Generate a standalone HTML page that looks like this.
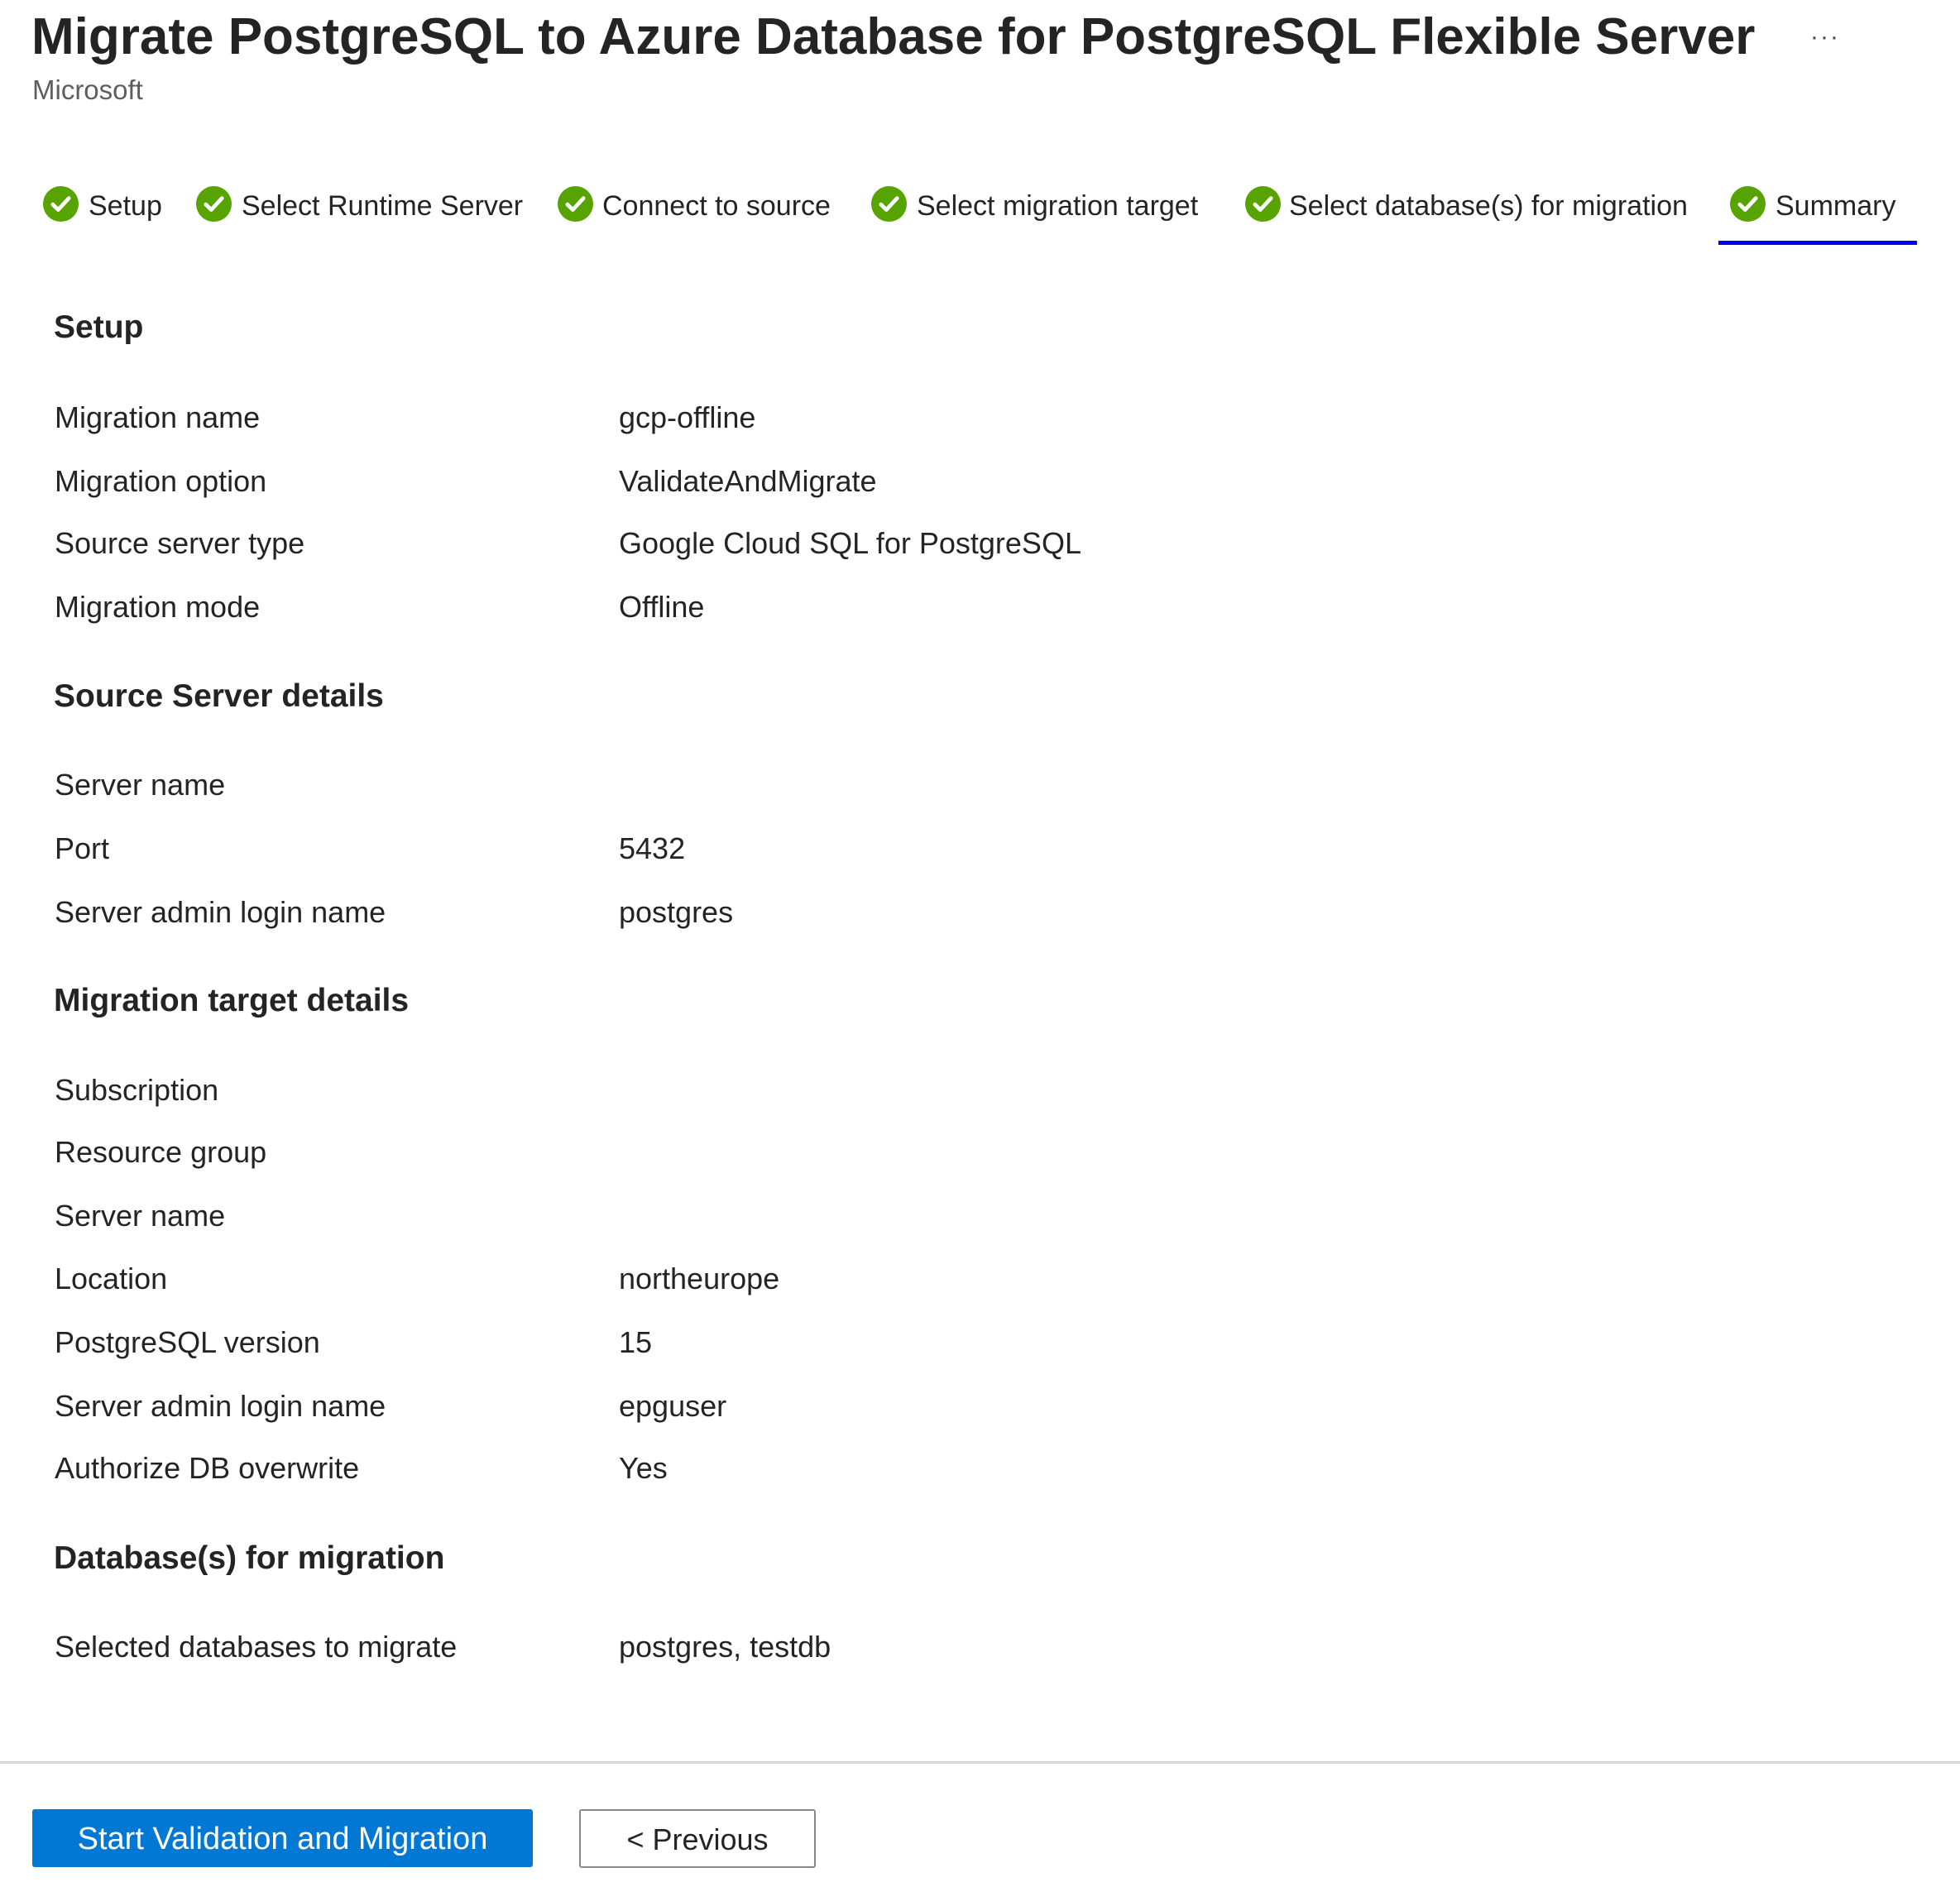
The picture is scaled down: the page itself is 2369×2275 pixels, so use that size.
<!DOCTYPE html>
<html><head><meta charset="utf-8"><style>
body{margin:0;width:2369px;height:2275px;background:#fff;position:relative;overflow:hidden;font-family:"Segoe UI","Liberation Sans",sans-serif;color:#242424}
.a{position:absolute;white-space:nowrap}
.t{font-size:62px;font-weight:600;left:38px;top:2px;line-height:86px;color:#242424}
.ms{font-size:33px;left:39px;top:89px;line-height:40px;color:#605e5c}
.tab{font-size:34px;line-height:44px;top:227px;color:#242424}
.ic{position:absolute;top:225px;width:43px;height:43px}
.h{font-size:39px;font-weight:700;line-height:50px;left:65px}
.l{font-size:36px;line-height:44px;left:66px}
.v{font-size:36px;line-height:44px;left:748px}
</style></head><body>
<div class="a t">Migrate PostgreSQL to Azure Database for PostgreSQL Flexible Server</div>
<div class="a" style="left:2188px;top:28px;font-size:30px;color:#444;letter-spacing:2px">···</div>
<div class="a ms">Microsoft</div>

<svg class="ic" style="left:52px" viewBox="0 0 20 20"><circle cx="10" cy="10" r="10" fill="#57a300"/><path d="M5.5 10.3l3 3 6-6.5" stroke="#fff" stroke-width="2.2" fill="none" stroke-linecap="round" stroke-linejoin="round"/></svg>
<div class="a tab" style="left:107px">Setup</div>
<svg class="ic" style="left:237px" viewBox="0 0 20 20"><circle cx="10" cy="10" r="10" fill="#57a300"/><path d="M5.5 10.3l3 3 6-6.5" stroke="#fff" stroke-width="2.2" fill="none" stroke-linecap="round" stroke-linejoin="round"/></svg>
<div class="a tab" style="left:292px">Select Runtime Server</div>
<svg class="ic" style="left:674px" viewBox="0 0 20 20"><circle cx="10" cy="10" r="10" fill="#57a300"/><path d="M5.5 10.3l3 3 6-6.5" stroke="#fff" stroke-width="2.2" fill="none" stroke-linecap="round" stroke-linejoin="round"/></svg>
<div class="a tab" style="left:728px">Connect to source</div>
<svg class="ic" style="left:1053px" viewBox="0 0 20 20"><circle cx="10" cy="10" r="10" fill="#57a300"/><path d="M5.5 10.3l3 3 6-6.5" stroke="#fff" stroke-width="2.2" fill="none" stroke-linecap="round" stroke-linejoin="round"/></svg>
<div class="a tab" style="left:1108px">Select migration target</div>
<svg class="ic" style="left:1505px" viewBox="0 0 20 20"><circle cx="10" cy="10" r="10" fill="#57a300"/><path d="M5.5 10.3l3 3 6-6.5" stroke="#fff" stroke-width="2.2" fill="none" stroke-linecap="round" stroke-linejoin="round"/></svg>
<div class="a tab" style="left:1558px">Select database(s) for migration</div>
<svg class="ic" style="left:2091px" viewBox="0 0 20 20"><circle cx="10" cy="10" r="10" fill="#57a300"/><path d="M5.5 10.3l3 3 6-6.5" stroke="#fff" stroke-width="2.2" fill="none" stroke-linecap="round" stroke-linejoin="round"/></svg>
<div class="a tab" style="left:2146px">Summary</div>
<div class="a" style="left:2077px;top:291px;width:240px;height:5px;background:#0000f0"></div>

<div class="a h" style="top:371px">Setup</div>
<div class="a l" style="top:483px">Migration name</div><div class="a v" style="top:483px">gcp-offline</div>
<div class="a l" style="top:560px">Migration option</div><div class="a v" style="top:560px">ValidateAndMigrate</div>
<div class="a l" style="top:635px">Source server type</div><div class="a v" style="top:635px">Google Cloud SQL for PostgreSQL</div>
<div class="a l" style="top:712px">Migration mode</div><div class="a v" style="top:712px">Offline</div>

<div class="a h" style="top:817px">Source Server details</div>
<div class="a l" style="top:927px">Server name</div>
<div class="a l" style="top:1004px">Port</div><div class="a v" style="top:1004px">5432</div>
<div class="a l" style="top:1081px">Server admin login name</div><div class="a v" style="top:1081px">postgres</div>

<div class="a h" style="top:1185px">Migration target details</div>
<div class="a l" style="top:1296px">Subscription</div>
<div class="a l" style="top:1371px">Resource group</div>
<div class="a l" style="top:1448px">Server name</div>
<div class="a l" style="top:1524px">Location</div><div class="a v" style="top:1524px">northeurope</div>
<div class="a l" style="top:1601px">PostgreSQL version</div><div class="a v" style="top:1601px">15</div>
<div class="a l" style="top:1678px">Server admin login name</div><div class="a v" style="top:1678px">epguser</div>
<div class="a l" style="top:1753px">Authorize DB overwrite</div><div class="a v" style="top:1753px">Yes</div>

<div class="a h" style="top:1859px">Database(s) for migration</div>
<div class="a l" style="top:1969px">Selected databases to migrate</div><div class="a v" style="top:1969px">postgres, testdb</div>

<div class="a" style="left:0;top:2129px;width:2369px;height:3px;background:#d6d6d6"></div>
<div class="a" style="left:39px;top:2187px;width:605px;height:70px;background:#0078d4;border-radius:3px;color:#fff;font-size:38px;line-height:72px;text-align:center">Start Validation and Migration</div>
<div class="a" style="left:700px;top:2187px;width:282px;height:67px;border:2px solid #8a8886;border-radius:3px;color:#242424;font-size:36px;line-height:70px;text-align:center">&lt; Previous</div>
</body></html>
